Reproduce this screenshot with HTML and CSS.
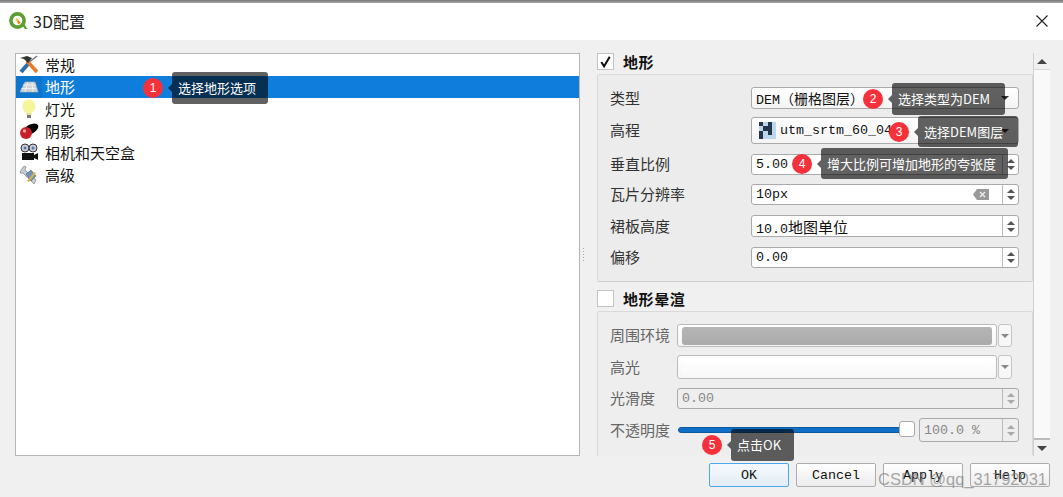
FILE: index.html
```html
<!DOCTYPE html>
<html lang="zh">
<head>
<meta charset="utf-8">
<title>3D配置</title>
<link rel="stylesheet" href="styles.css">
</head>
<body>
<div class="topline"></div>
<header class="titlebar">
  <svg class="qgis" viewBox="0 0 20 20" width="20" height="20"><circle cx="9.500" cy="9.500" r="6.600" fill="none" stroke="#5c9e31" stroke-width="3.600"/><path d="M13 13l4 5h2.500l-4-6z" fill="#5c9e31"/><path d="M8 7l5 5-3 1z" fill="#ee7913"/><circle cx="9" cy="9" r="1.500" fill="#f0c93c"/></svg>
  <span class="title">3D配置</span>
  <svg class="close" viewBox="0 0 12 12" width="12" height="12"><path d="M.5.5l11 11M11.500.5l-11 11" stroke="#222" stroke-width="1.100" fill="none"/></svg>
</header>
<main class="dialog">
  <div class="content">
    <ul class="list">
      <li class="item"><svg class="ico" viewBox="0 0 20 20"><path d="M9 8l9-7" stroke="#777" stroke-width="1.500" fill="none"/><path d="M2 17l7-8" stroke="#2e6da8" stroke-width="4" fill="none"/><path d="M8 6l10 11" stroke="#e8782a" stroke-width="3.500" fill="none"/><path d="M1 3l7-2 5 2-4 5-4-4z" fill="#333"/></svg>常规</li>
      <li class="item selected"><svg class="ico" viewBox="0 0 20 20"><path d="M6 5h10l3 10H1z" fill="#cfd4d8" stroke="#a8aeb4" stroke-width=".7"/><path d="M9 5l-3 10M13 5l1 10M4 8h13M2.500 11.500h15" stroke="#f4f4f4" stroke-width=".8" fill="none"/></svg>地形</li>
      <li class="item"><svg class="ico" viewBox="0 0 20 20"><ellipse cx="10" cy="7.500" rx="6.500" ry="7" fill="#f7f59a"/><path d="M7.500 14h5v2h-5z" fill="#e4e29a"/><path d="M8 16h4v3H8z" fill="#777"/></svg>灯光</li>
      <li class="item"><svg class="ico" viewBox="0 0 20 20"><ellipse cx="12" cy="8" rx="8" ry="4.500" fill="#000" transform="rotate(-30 12 8)"/><circle cx="7" cy="12" r="6" fill="#c8202a"/><circle cx="5.500" cy="10" r="1.700" fill="#f3a6a6"/></svg>阴影</li>
      <li class="item"><svg class="ico" viewBox="0 0 20 20"><circle cx="6" cy="5" r="4" fill="#ccd" stroke="#333"/><circle cx="14" cy="5" r="4" fill="#ccd" stroke="#333"/><circle cx="6" cy="5" r="1.500" fill="#4a7aa8"/><circle cx="14" cy="5" r="1.500" fill="#4a7aa8"/><path d="M3 10h12v7H3zM15 12l4-2v7l-4-2z" fill="#111"/></svg>相机和天空盒</li>
      <li class="item"><svg class="ico" viewBox="0 0 20 20"><path d="M2 5l3-4 2 1-1 3 11 10-2 4-11-11-3 0z" fill="#c5ccd2" stroke="#777" stroke-width=".6"/><path d="M7 9l5-4 5 6-5 5z" fill="#6b93bd" stroke="#555" stroke-width=".5"/><path d="M8 16l7-9 2 1-7 9z" fill="#d7b24c"/></svg>高级</li>
    </ul>
    <div class="splitter"></div>
    <section class="panel">
      <div class="scrollarea">
        <label class="group-head"><span class="check checked"><svg viewBox="0 0 16 16" width="16" height="16"><path d="M3.500 8l3 4.500 6-10" fill="none" stroke="#111" stroke-width="2.200"/></svg></span><b>地形</b></label>
        <div class="group terrain">
          <div class="row"><span class="lbl">类型</span><div class="field combo"><span class="val">DEM<span class="cjk">（栅格图层）</span></span><i class="arrow"></i></div></div>
          <div class="row"><span class="lbl">高程</span><div class="field combo"><svg class="raster" viewBox="0 0 4 4" width="17" height="17" shape-rendering="crispEdges"><rect width="4" height="4" fill="#bcd6ee"/><path d="M0 0h1v1H0zM2 0h1v1H2zM1 1h2v1H1zM0 2h1v1H0zM2 2h1v1H2zM0 3h1v1H0z" fill="#24364a"/></svg><span class="val">utm_srtm_60_04</span><i class="arrow"></i></div></div>
          <div class="row"><span class="lbl">垂直比例</span><div class="field spin"><span class="val">5.00</span><span class="spinbtn"><i class="up"></i><i class="down"></i></span></div></div>
          <div class="row"><span class="lbl">瓦片分辨率</span><div class="field spin"><span class="val">10px</span><svg class="clear" viewBox="0 0 16 11" width="16" height="11"><path d="M0 5.500L4 0h12v11H4z" fill="#999"/><path d="M7 3l5 5M12 3l-5 5" stroke="#eee" stroke-width="1.300"/></svg><span class="spinbtn"><i class="up"></i><i class="down"></i></span></div></div>
          <div class="row"><span class="lbl">裙板高度</span><div class="field spin"><span class="val">10.0<span class="cjk wide">地图单位</span></span><span class="spinbtn"><i class="up"></i><i class="down"></i></span></div></div>
          <div class="row"><span class="lbl">偏移</span><div class="field spin"><span class="val">0.00</span><span class="spinbtn"><i class="up"></i><i class="down"></i></span></div></div>
        </div>
        <label class="group-head second"><span class="check"></span><b>地形晕渲</b></label>
        <div class="group shading">
          <div class="row"><span class="lbl">周围环境</span><div class="colorbtn"><span class="swatch gray"></span></div><span class="dropbtn"><i class="arrow"></i></span></div>
          <div class="row"><span class="lbl">高光</span><div class="colorbtn"><span class="swatch white"></span></div><span class="dropbtn"><i class="arrow"></i></span></div>
          <div class="row"><span class="lbl">光滑度</span><div class="field spin off"><span class="val">0.00</span><span class="spinbtn"><i class="up"></i><i class="down"></i></span></div></div>
          <div class="row"><span class="lbl">不透明度</span><div class="slider"><span class="track"></span><span class="thumb"></span></div><div class="field spin off pct"><span class="val">100.0 %</span><span class="spinbtn"><i class="up"></i><i class="down"></i></span></div></div>
        </div>
      </div>
      <div class="scrollbar"><i class="sb-up"></i><span class="sb-track"></span><i class="sb-down"></i></div>
    </section>
  </div>
  <footer class="buttons">
    <button class="btn default">OK</button>
    <button class="btn">Cancel</button>
    <button class="btn">Apply</button>
    <button class="btn">Help</button>
  </footer>
</main>

<div class="note n1"><span class="badge">1</span><span class="tip">选择地形选项</span></div>
<div class="note n2"><span class="badge">2</span><span class="tip">选择类型为DEM</span></div>
<div class="note n3"><span class="badge">3</span><span class="tip">选择DEM图层</span></div>
<div class="note n4"><span class="badge">4</span><span class="tip">增大比例可增加地形的夸张度</span></div>
<div class="note n5"><span class="badge">5</span><span class="tip">点击OK</span></div>
<div class="watermark">CSDN @qq_31792031</div>
</body>
</html>
```

FILE: styles.css
```css
* { box-sizing: border-box; }
html, body { margin: 0; padding: 0; }
body {
  width: 1063px; height: 497px; overflow: hidden; position: relative;
  background: #f0f0f0; color: #111;
  font-family: "Liberation Mono", "Noto Sans CJK SC", monospace;
  font-size: 14px;
}
.topline { height: 3px; background: linear-gradient(#777, #aaa); }
.titlebar {
  height: 37px; background: #fff; display: flex; align-items: center;
  padding: 0 15px 1px 8px;
}
.qgis { flex: none; margin-right: 5px; }
.title { font-family: "Noto Sans CJK SC", sans-serif; font-size: 16px; line-height: 20px; color: #222; flex: 1; }
.dialog { padding: 13px 13px 0 15px; }
.content { display: flex; height: 403px; }
.list {
  list-style: none; margin: 0; padding: 0; width: 565px; background: #fff;
  border: 1px solid #b5b5b5; font-family: "Noto Sans CJK SC", sans-serif; font-size: 15px; color: #111;
}
.item { height: 22px; display: flex; align-items: center; padding-left: 3px; line-height: 20px; }
.item.selected { background: linear-gradient(90deg, #0c75ce 26px, #0f7ddb 26px); color: #fff; }
.ico { width: 20px; height: 20px; margin-right: 6px; flex: none; }
.splitter { width: 17px; position: relative; }
.splitter::after {
  content: ""; position: absolute; left: 3px; top: 195px; width: 1px; height: 15px;
  background: repeating-linear-gradient(#aaa 0 1px, transparent 1px 3px);
}
.panel { flex: 1; display: flex; }
.scrollarea { width: 436px; }
.group-head {
  height: 17px; display: flex; align-items: center;
  font-family: "Noto Sans CJK SC", sans-serif; font-size: 15px; line-height: 17px;
}
.group-head b { font-weight: 700; letter-spacing: .6px; margin-left: 9px; }
.check {
  width: 17px; height: 17px; background: #fff; border: 1px solid #c4c4c4;
  display: flex; align-items: center; justify-content: center; flex: none;
}
.group {
  border: 1px solid #d9d9d9; border-radius: 2px; background: #ececec;
  padding-left: 12px; margin-top: 4px;
}
.terrain { height: 208px; padding-top: 12px; border-bottom-color: #d0d0d0; }
.second { margin-top: 8px; }
.shading { height: 145px; padding-top: 12px; background: #eee; border-bottom: 0; color: #666; }
.row { display: flex; align-items: center; height: 21px; margin-bottom: 9px; }
.terrain .row:nth-child(1) { height: 22px; margin-bottom: 8px; }
.terrain .row:nth-child(2) { height: 27px; margin-bottom: 10px; }
.terrain .row:nth-child(3) { margin-bottom: 9px; }
.terrain .row:nth-child(4) { margin-bottom: 10px; }
.terrain .row:nth-child(5) { height: 22px; margin-bottom: 10px; }
.shading .row:nth-child(1) { height: 23px; margin-bottom: 8px; }
.shading .row:nth-child(2) { height: 24px; margin-bottom: 9px; }
.shading .row:nth-child(4) { height: 24px; }
.lbl { width: 141px; font-family: "Noto Sans CJK SC", sans-serif; font-size: 15px; line-height: 20px; padding-bottom: 1px; flex: none; color: #333; }
.shading .lbl { width: 67px; color: #666; }
.field {
  width: 268px; height: 100%; background: #fff; border: 1px solid #aaa; border-radius: 3px;
  display: flex; align-items: center; padding-left: 4px; position: relative; font-size: 13.33px;
}
.combo { background: linear-gradient(#fff, #f4f4f4); }
.val { white-space: nowrap; flex: 1; }
.cjk { font-family: "Noto Sans CJK SC", sans-serif; font-size: 14px; }
.cjk.wide { font-size: 15px; }
.raster { margin: 0 4px 0 3px; flex: none; }
.arrow {
  display: block; width: 0; height: 0; border-left: 4px solid transparent; border-right: 4px solid transparent;
  border-top: 4px solid #333; margin-right: 9px;
}
.spinbtn {
  width: 16px; height: 100%; border-left: 1px solid #bbb; display: flex; flex-direction: column;
  align-items: center; justify-content: center; gap: 3px; flex: none;
}
.up, .down { display: block; width: 0; height: 0; border-left: 4px solid transparent; border-right: 4px solid transparent; }
.up { border-bottom: 4px solid #555; }
.down { border-top: 4px solid #555; }
.clear { flex: none; margin-right: 13px; }
.off { background: #eee; color: #888; }
.off .up { border-bottom-color: #aaa; }
.off .down { border-top-color: #aaa; }
.colorbtn {
  width: 320px; height: 100%; border: 1px solid #bbb; border-radius: 3px; background: linear-gradient(#fff, #f6f6f6);
  padding: 2px 4px 1px; flex: none;
}
.swatch { display: block; height: 100%; border-radius: 3px; }
.swatch.gray { background: linear-gradient(#b6b6b6, #aaa); }
.swatch.white { background: linear-gradient(#fff, #f8f8f8); }
.dropbtn {
  width: 14px; height: 100%; margin-left: 1px; border: 1px solid #c4c4c4; border-radius: 3px; background: #f7f7f7;
  display: flex; align-items: center; justify-content: center; flex: none;
}
.dropbtn .arrow { margin: 0; border-top-color: #888; }
.shading .off { width: 342px; }
.shading .off.pct { width: 100px; }
.slider { width: 242px; height: 100%; position: relative; flex: none; }
.track { position: absolute; left: 1px; width: 224px; top: 9px; height: 6px; background: #0e6fc4; border: 1px solid #0a5aa0; border-radius: 3px; }
.thumb { position: absolute; left: 222px; top: 3px; width: 16px; height: 16px; background: #fff; border: 1px solid #aaa; border-radius: 3px; }
.scrollbar {
  width: 17px; background: #f5f5f5; display: flex; flex-direction: column; height: 403px; border-left: 1px solid #d0d0d0;
}
.sb-up, .sb-down { display: block; height: 16px; position: relative; background: #f0f0f0; flex: none; }
.sb-up::after, .sb-down::after {
  content: ""; position: absolute; left: 3px; top: 6px; border-left: 5px solid transparent; border-right: 5px solid transparent;
}
.sb-up::after { border-bottom: 5px solid #444; }
.sb-down::after { border-top: 5px solid #444; }
.sb-track { flex: 1; background: #f9f9f9; border-top: 1px solid #d8d8d8; border-bottom: 2px solid #bbb; }
.buttons { display: flex; justify-content: flex-end; gap: 7px; padding: 7px 0 0; }
.btn {
  width: 80px; height: 24px; border: 1px solid #adadad; border-radius: 2px; padding: 1px 0 0;
  background: linear-gradient(#fff, #ececec); font: 13.33px "Liberation Mono", monospace; color: #111;
}
.btn.default { border-color: #4aa8ea; background: linear-gradient(#f4f9fd, #e4eef6); }

.note { position: absolute; display: flex; align-items: center; font-family: "Noto Sans CJK SC", sans-serif; font-size: 13px; }
.badge {
  width: 20px; height: 20px; border-radius: 50%; background: #f5323c; color: #fff; font-size: 12px;
  display: flex; align-items: center; justify-content: center; flex: none; font-family: "Liberation Sans", sans-serif;
}
.tip {
  position: relative; margin-left: 9px; padding-left: 6px; height: 32px; line-height: 31px; white-space: nowrap;
  color: #fff; background: rgba(0,0,0,.62); border-radius: 3px;
}
.tip::before {
  content: ""; position: absolute; left: -4px; top: 12px;
  border-top: 4px solid transparent; border-bottom: 4px solid transparent; border-right: 4px solid rgba(0,0,0,.62);
}
.n1 { left: 143px; top: 72px; }
.n1 .tip { width: 96px; }
.n2 { left: 863px; top: 83px; }
.n2 .tip { width: 113px; }
.n3 { left: 889px; top: 116px; }
.n3 .tip { width: 100px; height: 31px; }
.n4 { left: 792px; top: 148px; }
.n4 .tip { width: 187px; height: 31px; }
.n5 { left: 702px; top: 429px; }
.n5 .tip { width: 63px; }
.watermark {
  position: absolute; left: 878px; top: 470px; font-family: "Liberation Sans", sans-serif; font-size: 16.5px;
  color: rgba(130,130,130,.7); white-space: nowrap;
}
```
